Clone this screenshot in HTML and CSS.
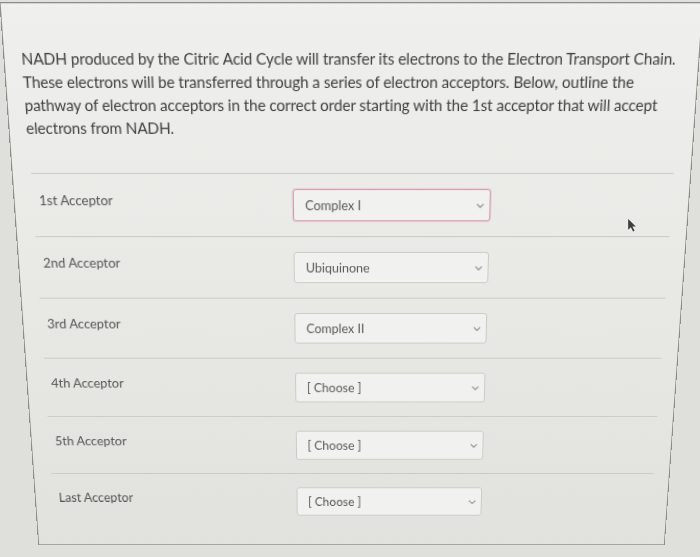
FILE: index.html
```html
<!DOCTYPE html>
<html lang="en">
<head>
    <meta charset="UTF-8">
    <meta name="viewport" content="width=device-width, initial-scale=1.0">
    <title>Electron Transport Chain Question</title>
    <link rel="stylesheet" href="styles.css">
</head>
<body>

    <div class="question-panel">
        <p class="question-text">NADH produced by the Citric Acid Cycle will transfer its electrons to the Electron Transport Chain. These electrons will be transferred through a series of electron acceptors. Below, outline the pathway of electron acceptors in the correct order starting with the 1st acceptor that will accept electrons from NADH.</p>

        <div class="answer-row">
            <span class="answer-label">1st Acceptor</span>
            <div class="answer-select focused">
                <span>Complex I</span>
                <svg class="chevron" viewBox="0 0 10 6"><path d="M1 1l4 4 4-4"/></svg>
            </div>
        </div>

        <div class="answer-row">
            <span class="answer-label">2nd Acceptor</span>
            <div class="answer-select">
                <span>Ubiquinone</span>
                <svg class="chevron" viewBox="0 0 10 6"><path d="M1 1l4 4 4-4"/></svg>
            </div>
        </div>

        <div class="answer-row">
            <span class="answer-label">3rd Acceptor</span>
            <div class="answer-select">
                <span>Complex II</span>
                <svg class="chevron" viewBox="0 0 10 6"><path d="M1 1l4 4 4-4"/></svg>
            </div>
        </div>

        <div class="answer-row">
            <span class="answer-label">4th Acceptor</span>
            <div class="answer-select">
                <span>[ Choose ]</span>
                <svg class="chevron" viewBox="0 0 10 6"><path d="M1 1l4 4 4-4"/></svg>
            </div>
        </div>

        <div class="answer-row">
            <span class="answer-label">5th Acceptor</span>
            <div class="answer-select">
                <span>[ Choose ]</span>
                <svg class="chevron" viewBox="0 0 10 6"><path d="M1 1l4 4 4-4"/></svg>
            </div>
        </div>

        <div class="answer-row">
            <span class="answer-label">Last Acceptor</span>
            <div class="answer-select">
                <span>[ Choose ]</span>
                <svg class="chevron" viewBox="0 0 10 6"><path d="M1 1l4 4 4-4"/></svg>
            </div>
        </div>
    </div>

    <!-- mouse pointer lying over the page -->
    <svg class="pointer" viewBox="0 0 8 12"><path d="M0 0v10l2.5-2.4 2 4 1.4-.7-2-3.9H7z"/></svg>

</body>
</html>
```

FILE: styles.css
```css
body {
    margin: 0;
    padding: 0;
    height: 557px;
    overflow: hidden;
    background-color: #dfe0db;
    font-family: Lato, "Open Sans", sans-serif;
    position: relative;
}

/* the screen is photographed at an angle, so the panel is tilted */
.question-panel {
    box-sizing: border-box;
    width: 663px;
    height: 559px;
    margin: 10px 0 0 20px;
    padding: 40px 16px 20px 18px;
    border: 1px solid #8c8d89;
    background: linear-gradient(#efefed, #e9e9e6 45%, #e1e2dd);
    transform: perspective(1200px) rotateX(-14.5deg);
    transform-origin: 50% 50%;
}

.question-text {
    margin: 0 0 33px -2px;
    font-size: 14.75px;
    line-height: 22px;
    letter-spacing: -0.1px;
    color: #404040;
}

.answer-row {
    display: flex;
    align-items: flex-start;
    height: 63px;
    box-sizing: border-box;
    padding-left: 6px;
    border-top: 1px solid #c9cac6;
}

.answer-label {
    width: 249px;
    padding-top: 16px;
    font-size: 13px;
    line-height: 20px;
    color: #555;
}

.answer-select {
    box-sizing: border-box;
    display: flex;
    align-items: center;
    justify-content: space-between;
    width: 194px;
    height: 32px;
    margin-top: 15px;
    padding: 0 5px 0 11px;
    border: 1px solid #cacac7;
    border-radius: 3px;
    background-color: #f1f1ef;
    font-size: 12.5px;
    color: #5a5a5a;
}

.answer-select.focused {
    border-color: #cf9fae;
    box-shadow: 0 0 0 1px #ead0d8;
}

.chevron {
    width: 8px;
    height: 5px;
    fill: none;
    stroke: #888;
    stroke-width: 1.4;
}

.pointer {
    position: absolute;
    left: 628px;
    top: 219px;
    width: 9px;
    height: 13px;
    fill: #3d3d3d;
}
```
